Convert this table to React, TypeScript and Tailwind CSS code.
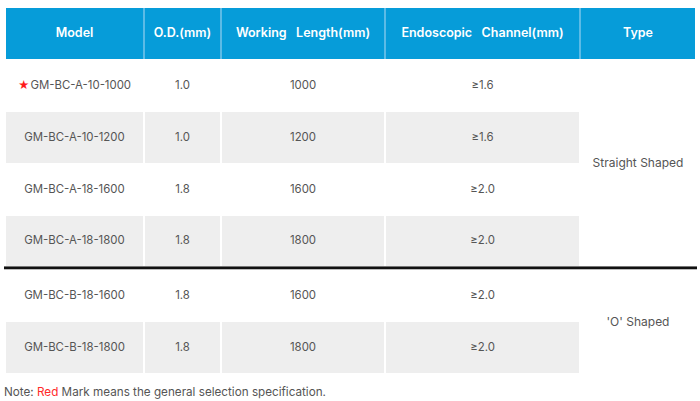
import React from "react";

const font = { fontFamily: "Inter, 'Noto Sans', sans-serif" };

type Row = { model: string; od: string; len: string; ch: string; star?: boolean; h: string; gray: boolean };

const groupA: Row[] = [
  { model: "GM-BC-A-10-1000", od: "1.0", len: "1000", ch: "≥1.6", star: true, h: "h-[53px]", gray: false },
  { model: "GM-BC-A-10-1200", od: "1.0", len: "1200", ch: "≥1.6", h: "h-[51px]", gray: true },
  { model: "GM-BC-A-18-1600", od: "1.8", len: "1600", ch: "≥2.0", h: "h-[53px]", gray: false },
  { model: "GM-BC-A-18-1800", od: "1.8", len: "1800", ch: "≥2.0", h: "h-[50px]", gray: true },
];
const groupB: Row[] = [
  { model: "GM-BC-B-18-1600", od: "1.8", len: "1600", ch: "≥2.0", h: "h-[52px]", gray: false },
  { model: "GM-BC-B-18-1800", od: "1.8", len: "1800", ch: "≥2.0", h: "h-[51px]", gray: true },
];

function Cells({ r }: { r: Row }) {
  const bg = r.gray ? "bg-[#eeeeee]" : "bg-white";
  return (
    <div className={`flex ${r.h} text-[11.4px]`}>
      <div className={`w-[137px] ${bg} flex items-center justify-center`}>
        {r.star && <span className="text-[#ff1a1a] text-[11px] mr-[1px]">★</span>}
        {r.model}
      </div>
      <div className={`w-[77px] border-l-2 border-white ${bg} flex items-center justify-center`}>{r.od}</div>
      <div className={`w-[164px] border-l-2 border-white ${bg} flex items-center justify-center`}>{r.len}</div>
      <div className={`w-[195px] border-l-2 border-white ${bg} flex items-center justify-center`}>{r.ch}</div>
    </div>
  );
}

function Group({ rows, type }: { rows: Row[]; type: string }) {
  return (
    <div className="flex">
      <div className="flex flex-col">
        {rows.map((r) => (
          <Cells key={r.model} r={r} />
        ))}
      </div>
      <div className="w-[116px] border-l-2 border-white bg-white flex items-center justify-center whitespace-pre text-[12px]">{type}</div>
    </div>
  );
}

export default function App() {
  return (
    <div className="w-[700px] h-[401px] bg-white overflow-hidden text-[#555555] text-[12px]" style={font}>
      <div className="pt-[8px] pl-[6px] w-[695px]">
        <div className="flex h-[51px] bg-[#069cd9] text-white font-semibold text-[12.5px]">
          <div className="w-[137px] flex items-center justify-center">Model</div>
          <div className="w-[77px] border-l-2 border-[#5cbbe6] flex items-center justify-center">O.D.(mm)</div>
          <div className="w-[164px] border-l-2 border-[#5cbbe6] flex items-center justify-center whitespace-pre">Working   Length(mm)</div>
          <div className="w-[195px] border-l-2 border-[#5cbbe6] flex items-center justify-center whitespace-pre">Endoscopic   Channel(mm)</div>
          <div className="w-[116px] border-l-2 border-[#5cbbe6] flex items-center justify-center">Type</div>
        </div>
        <Group rows={groupA} type="Straight Shaped" />
        <div className="-ml-[2px] w-[693px] h-[4px] flex flex-col">
          <div className="h-[1px] bg-[#777777]" />
          <div className="h-[2px] bg-[#111111]" />
          <div className="h-[1px] bg-[#bbbbbb]" />
        </div>
        <Group rows={groupB} type="'O' Shaped" />
      </div>
      <div className="pl-[4px] pt-[11px] text-[11.7px] text-[#555555]">
        Note: <span className="text-[#ff2a2a]">Red</span> Mark means the general selection specification.
      </div>
    </div>
  );
}
